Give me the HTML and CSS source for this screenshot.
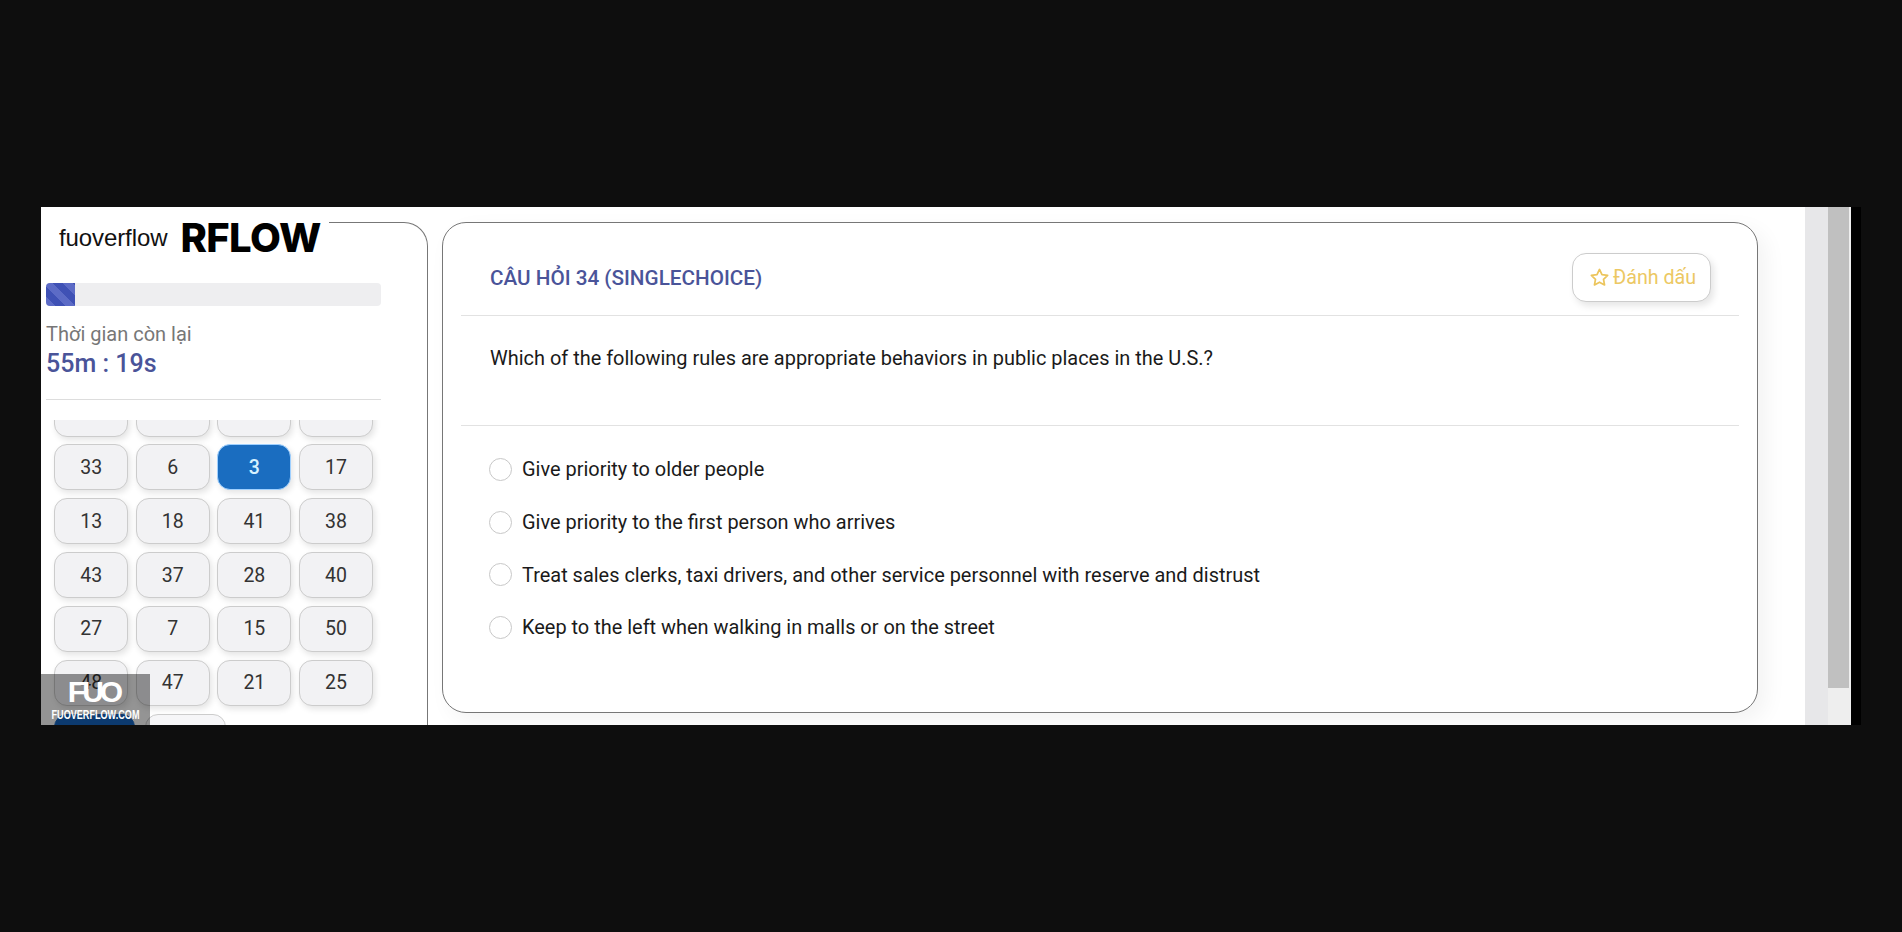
FILE: index.html
```html
<!DOCTYPE html>
<html lang="vi">
<head>
<meta charset="utf-8">
<title>RFLOW</title>
<link rel="stylesheet" href="styles.css">
</head>
<body>
<div class="screen">
  <div class="app">
    <aside class="sidebar">
      <div class="logo"><span class="logo-name">fuoverflow</span><span class="logo-mark">RFLOW</span></div>
      <div class="progress"><div class="progress-fill"></div></div>
      <div class="time-label">Thời gian còn lại</div>
      <div class="time-value">55m : 19s</div>
      <hr class="side-rule">
      <div class="nav-scroll">
        <div class="nav-grid">
          <button class="q q-hidden"></button><button class="q q-hidden"></button><button class="q q-hidden"></button><button class="q q-hidden"></button>
          <button class="q">33</button><button class="q">6</button><button class="q q-active">3</button><button class="q">17</button>
          <button class="q">13</button><button class="q">18</button><button class="q">41</button><button class="q">38</button>
          <button class="q">43</button><button class="q">37</button><button class="q">28</button><button class="q">40</button>
          <button class="q">27</button><button class="q">7</button><button class="q">15</button><button class="q">50</button>
          <button class="q">48</button><button class="q">47</button><button class="q">21</button><button class="q">25</button>
        </div>
        <div class="nav-actions">
          <button class="act act-primary"></button>
          <button class="act"></button>
        </div>
      </div>
    </aside>
    <main class="content">
      <section class="card">
        <header class="card-head">
          <h1 class="card-title">CÂU HỎI 34 (SINGLECHOICE)</h1>
          <button class="mark">
            <svg class="star" viewBox="0 0 24 24" width="21" height="21"><path d="M12 2.8l2.85 5.9 6.45.9-4.7 4.5 1.15 6.4L12 17.4l-5.75 3.1 1.15-6.4-4.7-4.5 6.45-.9z"/></svg>
            <span>Đánh dấu</span>
          </button>
        </header>
        <p class="question">Which of the following rules are appropriate behaviors in public places in the U.S.?</p>
        <ul class="options">
          <li class="option"><span class="radio"></span>Give priority to older people</li>
          <li class="option"><span class="radio"></span>Give priority to the first person who arrives</li>
          <li class="option"><span class="radio"></span>Treat sales clerks, taxi drivers, and other service personnel with reserve and distrust</li>
          <li class="option"><span class="radio"></span>Keep to the left when walking in malls or on the street</li>
        </ul>
      </section>
    </main>
    <div class="scrollbars">
      <div class="track-a"></div>
      <div class="track-b"><div class="thumb"></div></div>
    </div>
    <div class="watermark">
      <div class="wm-logo">FUO</div>
      <div class="wm-url">FUOVERFLOW.COM</div>
    </div>
  </div>
  <div class="strip"></div>
</div>
</body>
</html>
```
FILE: styles.css
```css
* { box-sizing: border-box; }
html, body { margin: 0; height: 100%; }
body { background: #0e0e0e; font-family: Roboto, "Liberation Sans", sans-serif; overflow: hidden; }
button { font-family: inherit; }

.screen { display: flex; align-items: flex-start; padding: 207px 0 0 41px; }
.app { position: relative; display: flex; width: 1810px; height: 518px; background: #fff; overflow: hidden; }
.strip { width: 10px; height: 518px; background: #000; }

.sidebar {
  position: relative;
  display: flex;
  flex-direction: column;
  flex: 0 0 387px;
  height: 520px;
  margin-top: 15px;
  padding: 60px 0 0 5px;
  border: 1px solid #777;
  border-width: 1px 1px 0 0;
  border-top-right-radius: 24px;
}
.logo {
  position: absolute;
  top: -16px;
  left: 0;
  width: 288px;
  height: 62px;
  padding-left: 18px;
  display: flex;
  align-items: center;
  background: #fff;
}
.logo-name { font-family: "Liberation Sans", sans-serif; font-size: 24px; color: #111; letter-spacing: -.1px; }
.logo-mark { margin-left: 13px; font-family: Inter, sans-serif; font-weight: 800; font-size: 40px; line-height: 44px; color: #000; letter-spacing: -.6px; }

.progress { width: 335px; height: 23px; background: #eeeef0; border-radius: 4px; overflow: hidden; flex: none; }
.progress-fill {
  width: 29px;
  height: 100%;
  background: repeating-linear-gradient(45deg, #5c6bc6 0, #5c6bc6 7px, #3f51b5 7px, #3f51b5 14px);
}
.time-label { margin-top: 16px; font-size: 20px; line-height: 24px; color: #777; }
.time-value { margin-top: 3px; font-size: 25px; line-height: 30px; font-weight: 500; color: #4a5499; }
.side-rule { width: 335px; margin: 20px 0 0; border: 0; border-top: 1px solid #ddd; flex: none; }

.nav-scroll { flex: 1; margin-top: 20px; padding-left: 8px; overflow: hidden; margin-left: -5px; min-height: 0; }
.nav-grid { display: grid; grid-template-columns: repeat(4, 74.3px); grid-auto-rows: 46px; column-gap: 7.3px; row-gap: 7.8px; margin: -29.4px 0 0 5px; }
.q {
  padding: 0;
  border: 1px solid #ccc;
  border-radius: 13px;
  background: #f2f2f4;
  box-shadow: 2px 3px 6px rgba(0,0,0,.11);
  font-size: 19.5px;
  color: #333;
}
.q-active { background: #1a6dc0; border-color: #9fd0ff; color: #d6f2ff; font-weight: 500; }
.nav-actions { display: flex; gap: 10px; margin: 8px 0 0 5px; }
.act { flex: 0 0 81px; height: 46px; border: 1px solid #ccc; border-radius: 13px; background: #f6f6f8; }
.act-primary { background: #1565c0; border-color: #1565c0; }

.content { flex: 0 0 1377px; padding: 15px 0 0 14px; height: 518px; }
.card {
  width: 1316px;
  height: 491px;
  border: 1px solid #777;
  border-radius: 24px;
  background: #fff;
  padding: 0 18px;
  box-shadow: 8px 8px 22px rgba(0,0,0,.05);
}
.card-head { display: flex; align-items: center; justify-content: space-between; height: 93px; padding: 17px 28px 0 29px; border-bottom: 1px solid #e2e2e2; }
.card-title { margin: 0; font-size: 20.7px; font-weight: 500; color: #4a5499; }
.mark {
  display: flex;
  align-items: center;
  gap: 3px;
  width: 139px;
  height: 49px;
  padding: 0 0 0 16px;
  background: #fff;
  border: 1px solid #ccc;
  border-radius: 14px;
  box-shadow: 3px 4px 7px rgba(0,0,0,.1);
  color: #ecc863;
  font-size: 19.7px;
}
.star { fill: none; stroke: #ecc55c; stroke-width: 2; stroke-linejoin: round; flex: none; }
.question { margin: 0; height: 110px; padding: 30px 29px 0; font-size: 19.95px; line-height: 24px; color: #1a1a1a; border-bottom: 1px solid #e2e2e2; }
.options { list-style: none; margin: 0; padding: 17px 0 0 28px; }
.option { display: flex; align-items: center; gap: 10px; height: 52.7px; font-size: 19.95px; color: #1a1a1a; }
.radio { flex: none; width: 23px; height: 23px; border: 1px solid #c8c8c8; border-radius: 50%; background: #fff; }

.scrollbars { display: flex; flex: 0 0 46px; height: 518px; }
.track-a { width: 23px; background: #e7e7e9; }
.track-b { width: 23px; background: #eeeeee; }
.thumb { width: 21px; height: 481px; background: #c0c0c0; }

.watermark {
  position: absolute;
  left: 0;
  bottom: 0;
  width: 109px;
  height: 51px;
  background: rgba(0,0,0,.42);
  color: #fff;
  text-align: center;
}
.wm-logo { margin-top: 2px; font-family: "Liberation Sans", sans-serif; font-size: 30px; line-height: 32px; letter-spacing: -4px; font-weight: 700; padding-right: 4px; }
.wm-url { font-family: "Liberation Sans", sans-serif; font-weight: 700; font-size: 13px; line-height: 14px; transform: scaleX(.7); white-space: nowrap; margin: 0 -10px; }
```
